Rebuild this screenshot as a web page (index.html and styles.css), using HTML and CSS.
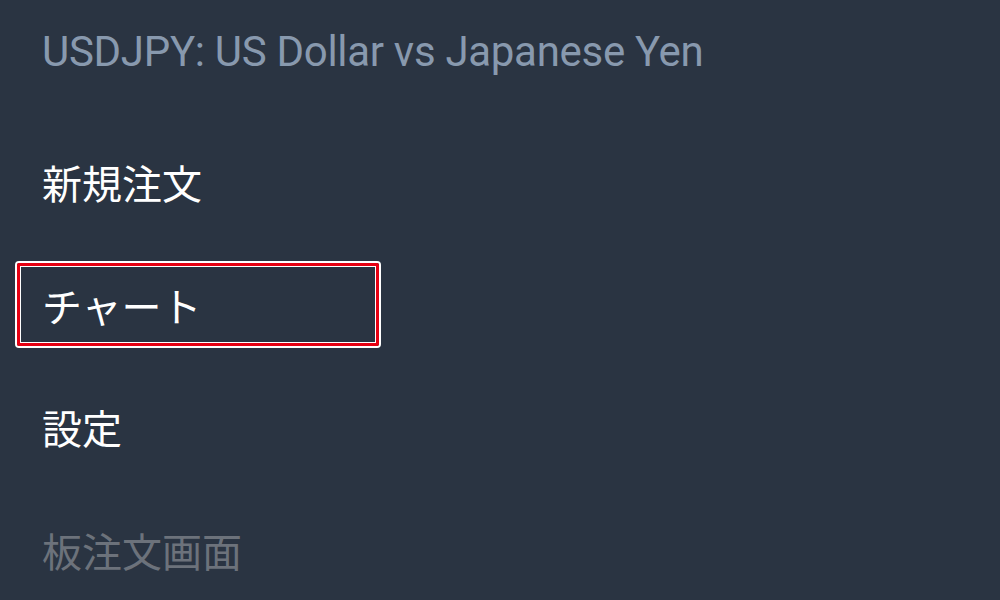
FILE: index.html
```html
<!DOCTYPE html>
<html lang="ja">
<head>
<meta charset="utf-8">
<link rel="stylesheet" href="styles.css">
</head>
<body>
<div class="screen">
  <header class="title">USDJPY: US Dollar vs Japanese Yen</header>
  <ul class="menu">
    <li class="item"><span class="label">新規注文</span></li>
    <li class="item"><span class="label selected">チャート</span></li>
    <li class="item"><span class="label">設定</span></li>
    <li class="item"><span class="label disabled">板注文画面</span></li>
  </ul>
</div>
</body>
</html>
```
FILE: styles.css
```css
html, body {
  margin: 0;
  padding: 0;
  background: #2a3442;
}
.screen {
  width: 1000px;
  height: 600px;
  overflow: hidden;
  background: #2a3442;
  font-family: Roboto, "Noto Sans CJK JP", sans-serif;
}
.title {
  box-sizing: border-box;
  height: 121px;
  padding: 27px 0 0 42px;
  font-size: 42px;
  line-height: 49px;
  letter-spacing: -0.3px;
  color: #8899ae;
  white-space: nowrap;
}
.menu {
  list-style: none;
  margin: 0;
  padding: 0;
}
.item {
  height: 122.5px;
  display: flex;
  align-items: center;
  padding-left: 17px;
}
.label {
  box-sizing: border-box;
  width: 362px;
  height: 83px;
  display: flex;
  align-items: center;
  padding-left: 22px;
  border: 3px solid transparent;
  border-radius: 2px;
  font-family: "Noto Sans CJK JP", sans-serif;
  font-size: 40px;
  line-height: 48px;
  color: #ffffff;
}
.selected {
  border-color: #e60012;
  box-shadow: 0 0 0 2px #ffffff, inset 0 0 0 1px #ffffff;
}
.disabled {
  color: #6c727b;
}
```
